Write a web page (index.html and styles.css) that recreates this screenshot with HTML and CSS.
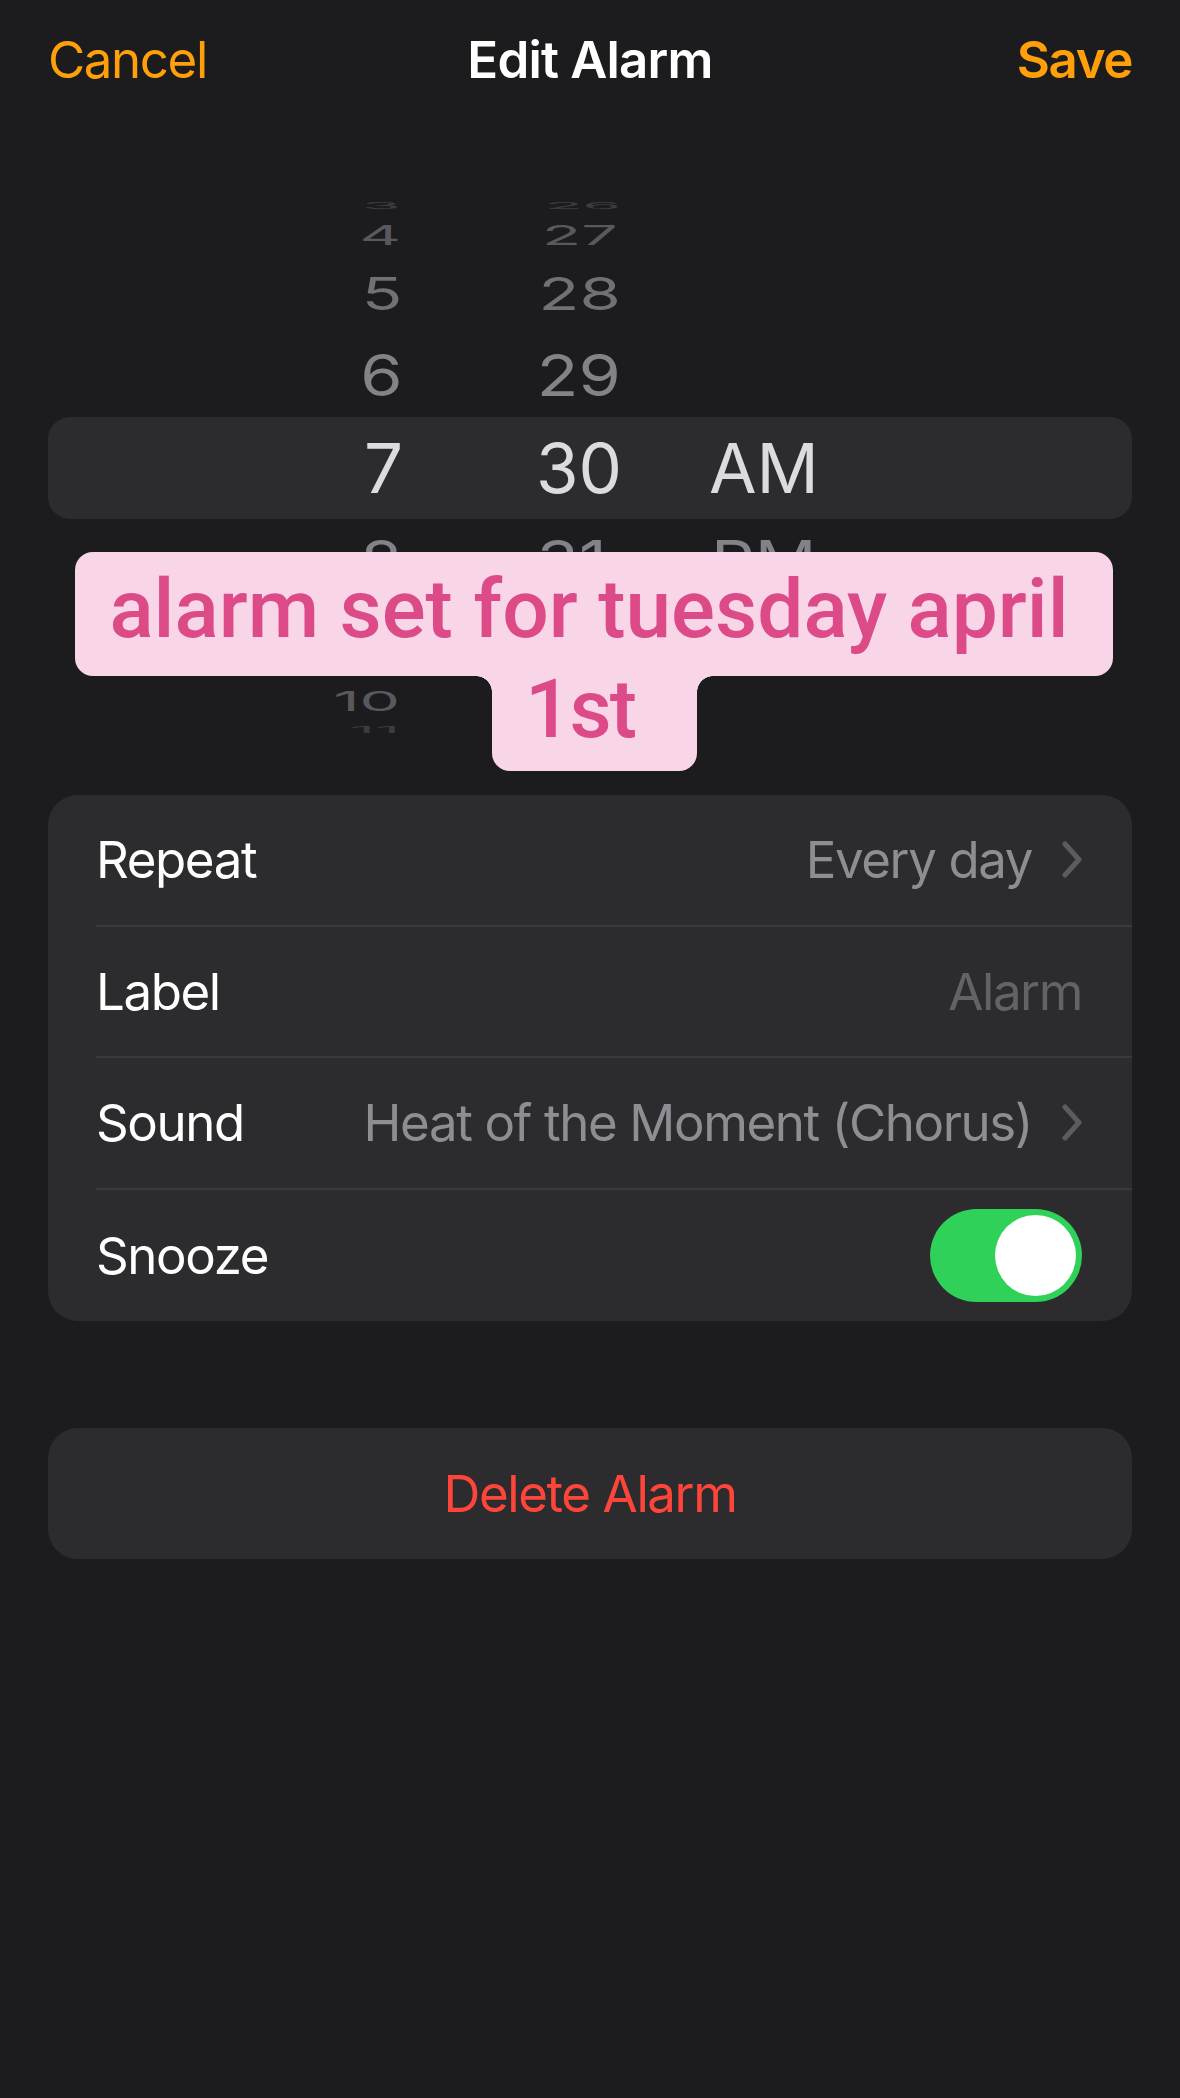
FILE: index.html
```html
<!DOCTYPE html>
<html lang="en">
<head>
    <meta charset="UTF-8">
    <meta name="viewport" content="width=device-width, initial-scale=1.0">
    <title>Edit Alarm</title>
    <link rel="stylesheet" href="styles.css">
</head>
<body>
    <div class="screen">
        <!-- Navigation bar -->
        <div class="nav">
            <span class="nav-btn">Cancel</span>
            <span class="nav-title">Edit Alarm</span>
            <span class="nav-btn nav-save">Save</span>
        </div>

        <!-- Time picker wheel -->
        <div class="picker">
            <div class="wheel">
                <div class="wheel-row r3"><span class="h">3</span><span class="m">26</span></div>
                <div class="wheel-row r4"><span class="h">4</span><span class="m">27</span></div>
                <div class="wheel-row r5"><span class="h">5</span><span class="m">28</span></div>
                <div class="wheel-row r6"><span class="h">6</span><span class="m">29</span></div>
                <div class="wheel-row selected"><span class="h">7</span><span class="m">30</span><span class="p">AM</span></div>
                <div class="wheel-row r6"><span class="h">8</span><span class="m">31</span><span class="p">PM</span></div>
                <div class="wheel-row r5"><span class="h">9</span><span class="m">32</span></div>
                <div class="wheel-row r4"><span class="h">10</span><span class="m">33</span></div>
                <div class="wheel-row r3"><span class="h">11</span><span class="m">34</span></div>
            </div>

            <!-- Sticker over the picker -->
            <div class="sticker">
                <div class="sticker-top">alarm set for tuesday april</div>
                <div class="sticker-tab">1st</div>
            </div>
        </div>

        <!-- Settings list -->
        <div class="card">
            <div class="row">
                <div class="row-inner">
                    <span class="row-label">Repeat</span>
                    <span class="row-value">Every day</span>
                    <svg class="chevron" width="20" height="37" viewBox="0 0 20 37"><polyline points="3,3 17,18.5 3,34" fill="none" stroke="#5c5c60" stroke-width="5" stroke-linecap="round" stroke-linejoin="round"/></svg>
                </div>
            </div>
            <div class="row">
                <div class="row-inner">
                    <span class="row-label">Label</span>
                    <span class="row-value placeholder">Alarm</span>
                </div>
            </div>
            <div class="row">
                <div class="row-inner">
                    <span class="row-label">Sound</span>
                    <span class="row-value">Heat of the Moment (Chorus)</span>
                    <svg class="chevron" width="20" height="37" viewBox="0 0 20 37"><polyline points="3,3 17,18.5 3,34" fill="none" stroke="#5c5c60" stroke-width="5" stroke-linecap="round" stroke-linejoin="round"/></svg>
                </div>
            </div>
            <div class="row last">
                <div class="row-inner">
                    <span class="row-label">Snooze</span>
                    <span class="toggle"><span class="knob"></span></span>
                </div>
            </div>
        </div>

        <div class="card delete">Delete Alarm</div>
    </div>
</body>
</html>
```

FILE: styles.css
```css
body {
    margin: 0;
    padding: 0;
    background-color: #1c1c1e;
    font-family: Inter, "Noto Sans", sans-serif;
    color: #fff;
}
.screen {
    width: 1180px;
    min-height: 2098px;
    background-color: #1c1c1e;
}

/* Navigation */
.nav {
    display: grid;
    grid-template-columns: 1fr auto 1fr;
    box-sizing: border-box;
    height: 122px;
    padding: 34px 48px 0;
    font-size: 51px;
    line-height: 51px;
    letter-spacing: -1.4px;
}
.nav-btn {
    color: #ff9f0a;
}
.nav-title {
    font-weight: 600;
    letter-spacing: -0.8px;
}
.nav-save {
    font-weight: 600;
    text-align: right;
}

/* Picker */
.picker {
    position: relative;
    margin-top: 74px;
}
.wheel {
    padding: 0 48px;
}
.wheel-row {
    display: grid;
    grid-template-columns: 355px 133px 173px 1fr;
    grid-template-rows: minmax(0, 1fr);
    align-items: center;
    height: 84px;
    font-size: 69px;
    line-height: 69px;
    color: #838387;
}
.wheel-row span {
    display: inline-block;
}
.wheel-row .h {
    grid-column: 1;
    justify-self: end;
}
.wheel-row .m {
    grid-column: 3;
}
.wheel-row .p {
    grid-column: 4;
}
.wheel-row.selected {
    height: 102px;
    background-color: #2c2c2e;
    border-radius: 22px;
    color: #dcdcde;
}
.r3 {
    height: 20px;
    color: #3c3c40;
}
.r3 span {
    transform: scale(0.9, 0.12);
}
.r4 {
    height: 38px;
    color: #59595d;
}
.r4 span {
    transform: scale(0.93, 0.4);
}
.r5 {
    height: 79px;
    color: #717175;
}
.r5 span {
    transform: scale(0.97, 0.66);
}
.r6 span {
    transform: scale(0.99, 0.83);
}

/* Sticker */
.sticker {
    position: absolute;
    top: 356px;
    left: 75px;
    width: 1038px;
    display: flex;
    flex-direction: column;
    align-items: center;
    font-family: Roboto, "Noto Sans", sans-serif;
    font-weight: 500;
    font-size: 82px;
    color: #dc4a88;
    text-align: center;
}
.sticker-top {
    box-sizing: border-box;
    width: 100%;
    height: 124px;
    padding: 8px 10px 0 0;
    line-height: 99px;
    background-color: #f8d6e8;
    border-radius: 18px;
}
.sticker-tab {
    position: relative;
    box-sizing: border-box;
    width: 205px;
    height: 95px;
    padding-right: 28px;
    line-height: 66px;
    background-color: #f8d6e8;
    border-radius: 0 0 18px 18px;
    letter-spacing: -2px;
}
.sticker-tab::before,
.sticker-tab::after {
    content: "";
    position: absolute;
    top: 0;
    width: 16px;
    height: 16px;
}
.sticker-tab::before {
    left: -16px;
    background: radial-gradient(circle at 0 100%, transparent 15.5px, #f8d6e8 16px);
}
.sticker-tab::after {
    right: -16px;
    background: radial-gradient(circle at 100% 100%, transparent 15.5px, #f8d6e8 16px);
}

/* Settings card */
.card {
    margin: 55px 48px 0;
    background-color: #2c2c2e;
    border-radius: 30px;
}
.row {
    padding-left: 48px;
}
.row-inner {
    display: flex;
    align-items: center;
    box-sizing: border-box;
    height: 131.5px;
    padding-right: 50px;
    border-bottom: 2px solid #3a3a3c;
    font-size: 51px;
    line-height: 51px;
    letter-spacing: -1.4px;
}
.row.last .row-inner {
    border-bottom: none;
}
.row-label {
    flex: 1;
}
.row-value {
    color: #8d8d93;
}
.row-value.placeholder {
    color: #636367;
}
.chevron {
    margin-left: 30px;
}
.toggle {
    display: flex;
    justify-content: flex-end;
    align-items: center;
    box-sizing: border-box;
    width: 152px;
    height: 93px;
    padding: 6px;
    border-radius: 47px;
    background-color: #30d158;
}
.knob {
    width: 81px;
    height: 81px;
    border-radius: 50%;
    background-color: #fff;
}

/* Delete button */
.delete {
    margin-top: 107px;
    height: 131px;
    display: flex;
    align-items: center;
    justify-content: center;
    font-size: 51px;
    line-height: 51px;
    letter-spacing: -1.4px;
    color: #ff453a;
}
```
